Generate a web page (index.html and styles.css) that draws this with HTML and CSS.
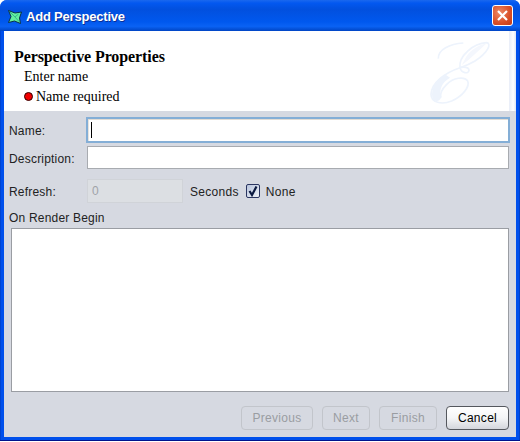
FILE: index.html
```html
<!DOCTYPE html>
<html>
<head>
    <title>Add Perspective</title>
    <link rel="stylesheet" href="styles.css">
</head>
<body>
    <div class="window">
        <div class="title-bar">
            <svg class="app-icon" width="14" height="14" viewBox="0 0 14 14">
                <path d="M0.5 0.5 L7 3 L13.5 2 L11.5 8 L12.5 13.5 L6.5 11 L0.5 12.5 L3 6.5 Z" fill="#62ee9f" stroke="#0a2f48" stroke-width="1"/>
                <path d="M2 2 L7 7 L11 11.5 M7 7 L10.5 4" stroke="#2aa886" stroke-width="0.8" fill="none"/>
            </svg>
            <span class="title-text">Add Perspective</span>
            <div class="close-box">
                <svg width="13" height="13" viewBox="0 0 13 13">
                    <path d="M2 2 L11 11 M11 2 L2 11" stroke="#fff" stroke-width="2.2"/>
                </svg>
            </div>
        </div>
        <div class="content">
            <div class="banner">
                <h1>Perspective Properties</h1>
                <p class="hint">Enter name</p>
                <p class="hint error"><span class="dot"></span>Name required</p>
                <svg class="watermark" width="75" height="75" viewBox="0 0 225 225" aria-hidden="true">
                    <g fill="none" stroke="#edf3fc" stroke-width="5">
                        <path d="M40 68 C38 40 75 24 115 21"/>
                        <path d="M105 95 C100 60 145 22 185 20 C200 22 190 50 150 75 C135 84 120 90 105 95"/>
                        <path d="M105 95 C110 112 130 115 132 103 C132 93 115 92 105 95"/>
                        <path d="M105 95 C60 110 20 140 18 175 C18 200 50 207 80 195 C115 180 135 150 128 135 C118 120 85 125 65 145 C50 160 45 175 48 185"/>
                    </g>
                    <path d="M60 115 C30 135 18 160 22 185 C30 198 42 198 48 185 C42 160 50 140 75 125 Z" fill="#edf3fc"/>
                    <path d="M125 60 C140 40 165 26 185 22 C165 40 135 70 110 88 Z" fill="#f4f7fd"/>
                </svg>
                <div class="banner-edge"></div>
            </div>
            <div class="form">
                <div class="row row-name">
                    <label>Name:</label>
                    <div class="input focused"><span class="caret"></span></div>
                </div>
                <div class="row row-desc">
                    <label>Description:</label>
                    <div class="input"></div>
                </div>
                <div class="row row-refresh">
                    <label>Refresh:</label>
                    <div class="input disabled">0</div>
                    <span class="seconds">Seconds</span>
                    <span class="checkbox">
                        <svg width="12" height="12" viewBox="0 0 12 12">
                            <path d="M2.5 6 L5 10 L9.5 1.5" fill="none" stroke="#0c1a40" stroke-width="2.2"/>
                        </svg>
                    </span>
                    <span class="none-label">None</span>
                </div>
                <div class="section-label">On Render Begin</div>
                <div class="script-area"></div>
                <div class="buttons">
                    <button class="btn btn-prev" disabled>Previous</button>
                    <button class="btn btn-next" disabled>Next</button>
                    <button class="btn btn-finish" disabled>Finish</button>
                    <button class="btn btn-cancel">Cancel</button>
                </div>
            </div>
        </div>
    </div>
</body>
</html>
```

FILE: styles.css
```css
html, body {
    margin: 0;
    padding: 0;
}

body {
    width: 520px;
    height: 442px;
    overflow: hidden;
    background: #fff;
}

.window {
    width: 520px;
    height: 441px;
    display: flex;
    flex-direction: column;
    box-sizing: border-box;
    border-radius: 7px 7px 0 0;
    background: linear-gradient(90deg, #0038b8 0, #0050ec 1px, #0050ec 519px, #0030a8 520px);
    border-bottom: 1px solid #00138c;
    overflow: hidden;
}

.title-bar {
    height: 31px;
    flex: none;
    display: flex;
    align-items: center;
    padding: 2px 7px 0 8px;
    box-sizing: border-box;
    background: linear-gradient(180deg, #1a68ee 0%, #0358f0 10%, #0250de 30%, #0058ee 70%, #0a62f4 85%, #0045c4 100%);
}

.app-icon {
    flex: none;
    margin-right: 4px;
}

.title-text {
    font-family: "Liberation Sans", sans-serif;
    font-weight: bold;
    font-size: 13px;
    letter-spacing: -0.2px;
    color: #fff;
    text-shadow: 1px 1px 0 #0a2f96;
    flex: 1;
}

.close-box {
    width: 21px;
    height: 21px;
    margin-top: -2px;
    box-sizing: border-box;
    border: 1px solid #fff;
    border-radius: 3px;
    background: radial-gradient(circle at 35% 35%, #ec8a68, #d94e26 60%, #c23a16);
    display: flex;
    align-items: center;
    justify-content: center;
}

.content {
    flex: 1;
    display: flex;
    flex-direction: column;
    margin: 0 4px 4px 4px;
    background: #d6d9e1;
}

.banner {
    position: relative;
    height: 80px;
    flex: none;
    box-sizing: border-box;
    padding: 17px 0 0 10px;
    background: #fff;
    font-family: "Liberation Serif", serif;
    color: #000;
}

.banner h1 {
    margin: 0 0 3px 0;
    font-size: 16px;
    line-height: 17px;
    letter-spacing: -0.1px;
    font-weight: bold;
}

.hint {
    margin: 0 0 3px 10px;
    font-size: 14px;
    line-height: 17px;
}

.error {
    display: flex;
    align-items: center;
}

.dot {
    width: 7px;
    height: 7px;
    margin-right: 3px;
    border: 1px solid #300;
    border-radius: 50%;
    background: #f00000;
}

.watermark {
    position: absolute;
    top: 5px;
    left: 421px;
}

.banner-edge {
    position: absolute;
    top: 0;
    right: 0;
    bottom: 0;
    width: 7px;
    background: linear-gradient(90deg, #e8edf8, #f6f8fc 40%, #fff 60%, #dfe5f2);
}

.form {
    flex: 1;
    display: flex;
    flex-direction: column;
    box-sizing: border-box;
    padding: 6px 7px 7px 5px;
    font-family: "Liberation Sans", sans-serif;
    font-size: 12px;
    letter-spacing: 0.2px;
    color: #222;
}

.row {
    display: flex;
    align-items: center;
}

.row label {
    width: 78px;
    flex: none;
    padding-top: 2px;
}

.input {
    flex: 1;
    box-sizing: border-box;
    background: #fff;
    border: 1px solid #a8abb0;
    display: flex;
    align-items: center;
}

.row-name {
    height: 26px;
}

.row-name .input {
    height: 26px;
    margin: 0 -1px;
}

.focused {
    border: 2px solid #84aed6;
    box-shadow: inset 0 1px 0 #e2dcd4, inset 1px 0 0 #e8e4de;
}

.caret {
    width: 1px;
    height: 16px;
    margin-left: 3px;
    background: #000;
}

.row-desc {
    height: 23px;
    margin-top: 3px;
}

.row-desc .input {
    height: 23px;
}

.row-refresh {
    height: 24px;
    margin-top: 10px;
}

.disabled {
    flex: none;
    width: 96px;
    height: 24px;
    padding-left: 4px;
    margin-right: 7px;
    color: #a0a3a8;
    background: #dcdfe3;
    border-color: #d0d3d8;
}

.seconds {
    padding-top: 1px;
    letter-spacing: 0.3px;
}

.checkbox {
    width: 12px;
    height: 12px;
    margin: 0 6px 0 7px;
    border: 1px solid #2a3560;
    border-radius: 2px;
    background: linear-gradient(135deg, #b8c4dc, #eef1f6);
    display: flex;
    align-items: center;
    justify-content: center;
}

.none-label {
    padding-top: 1px;
    letter-spacing: 0.3px;
}

.section-label {
    margin-top: 8px;
    height: 17px;
    line-height: 15px;
}

.script-area {
    height: 164px;
    margin-left: 2px;
    box-sizing: border-box;
    background: #fff;
    border: 1px solid #9a9da3;
}

.buttons {
    display: flex;
    justify-content: flex-end;
    gap: 9px;
    margin-top: 14px;
}

.btn {
    height: 24px;
    padding: 0;
    box-sizing: border-box;
    border-radius: 4px;
    font-family: "Liberation Sans", sans-serif;
    font-size: 12px;
    letter-spacing: 0.3px;
}

.btn:disabled {
    color: #9a9da2;
    background: #d6d9e1;
    border: 1px solid #c2c5cb;
}

.btn-prev {
    width: 72px;
}

.btn-next {
    width: 48px;
}

.btn-finish {
    width: 58px;
}

.btn-cancel {
    width: 63px;
    color: #000;
    border: 1px solid #55585e;
    background: linear-gradient(180deg, #fff, #f4f5f7 50%, #d4d6dc);
}
```
